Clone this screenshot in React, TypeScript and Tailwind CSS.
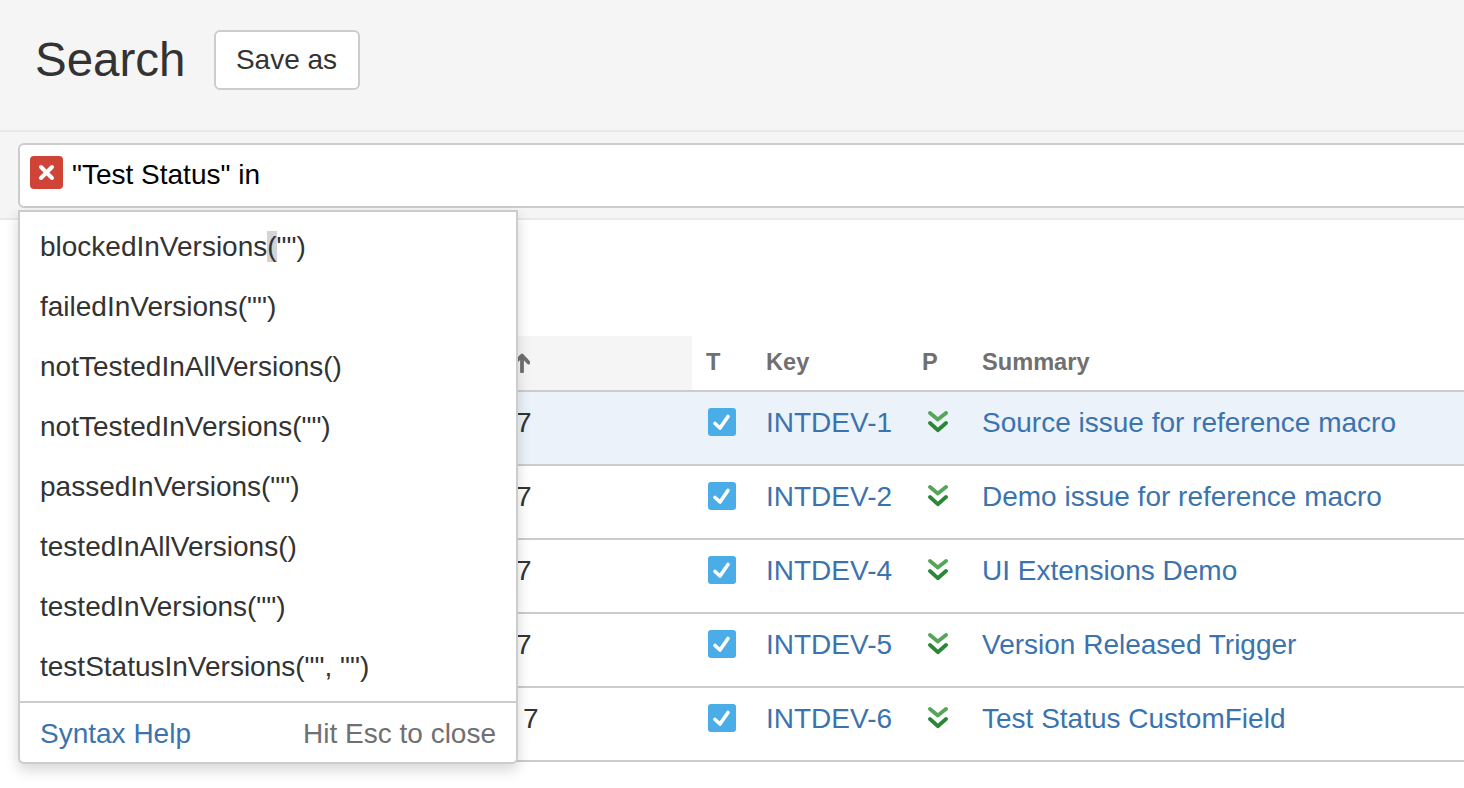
const suggestions = [
  'failedInVersions("")',
  'notTestedInAllVersions()',
  'notTestedInVersions("")',
  'passedInVersions("")',
  'testedInAllVersions()',
  'testedInVersions("")',
  'testStatusInVersions("", "")',
]

const issues = [
  { key: 'INTDEV-1', summary: 'Source issue for reference macro', pad: 'pl-[416px]', bg: 'bg-[#ebf2f9]' },
  { key: 'INTDEV-2', summary: 'Demo issue for reference macro', pad: 'pl-[416px]', bg: 'bg-white' },
  { key: 'INTDEV-4', summary: 'UI Extensions Demo', pad: 'pl-[416px]', bg: 'bg-white' },
  { key: 'INTDEV-5', summary: 'Version Released Trigger', pad: 'pl-[416px]', bg: 'bg-white' },
  { key: 'INTDEV-6', summary: 'Test Status CustomField', pad: 'pl-[423px]', bg: 'bg-white' },
]

function TaskIcon() {
  return (
    <svg width="28" height="28" viewBox="0 0 28 28" className="block">
      <rect width="28" height="28" rx="3" fill="#4bade8" />
      <path d="M7 15.5l5 4.5 8-11.5" fill="none" stroke="#fff" strokeWidth="3.6" strokeLinecap="round" strokeLinejoin="round" />
    </svg>
  )
}

function LowestIcon() {
  return (
    <svg width="20" height="22" viewBox="0 0 20 22" className="block">
      <path d="M2 2l7.8 6.5 8.2-6.5" fill="none" stroke="#57a55a" strokeWidth="3.8" strokeLinecap="round" strokeLinejoin="round" />
      <path d="M2 12l7.8 7.2 8.2-7.2" fill="none" stroke="#2a8735" strokeWidth="3.8" strokeLinecap="round" strokeLinejoin="round" />
    </svg>
  )
}

export default function App() {
  return (
    <div className="relative h-[788px] w-[1464px] overflow-hidden bg-white font-['Liberation_Sans',Arial,sans-serif] text-[28px] text-[#333]">
      <header className="flex h-[132px] items-center border-b-2 border-[#e9e9e9] bg-[#f5f5f5] pb-[10px] pl-[35px]">
        <h1 className="text-[47.5px] leading-none font-normal">Search</h1>
        <button className="ml-[28px] h-[60px] w-[146px] rounded-[6px] border-2 border-[#ccc] bg-white text-[28px]">Save as</button>
      </header>

      <div className="h-[88px] border-b-2 border-[#e9e9e9] bg-[#f5f5f5] pt-[11px] pl-[18px]">
        <div className="flex h-[65px] w-[1470px] items-center rounded-[6px] border-2 border-[#ccc] bg-white pl-[10px] text-black">
          <svg width="33" height="33" viewBox="0 0 33 33" className="mr-[9px] mb-[6px] block">
            <rect width="33" height="33" rx="4" fill="#d04437" />
            <path d="M11 11l11 11M22 11L11 22" stroke="#fff" strokeWidth="4" strokeLinecap="round" />
          </svg>
          <span className="pb-[2px]">"Test Status" in</span>
        </div>
      </div>

      <div className="ml-[100px] pt-[116px]">
        <div className="flex h-[56px] items-center border-b-2 border-[#ccc] text-[23.6px] font-bold text-[#707070]">
          <div className="flex h-[54px] w-[592px] items-center bg-[#f5f5f5] pl-[414px]">
            <svg width="16" height="20" viewBox="0 0 16 20" className="block">
              <path d="M8 18.5V3M2 8.5L8 2.5l6.5 7" fill="none" stroke="#707070" strokeWidth="3.8" strokeLinecap="round" strokeLinejoin="round" />
            </svg>
          </div>
          <div className="w-[74px] pl-[14px]">T</div>
          <div className="w-[156px]">Key</div>
          <div className="w-[60px]">P</div>
          <div>Summary</div>
        </div>
        {issues.map((issue) => (
          <div key={issue.key} className={`flex h-[74px] border-b-2 border-[#ccc] pt-[15px] ${issue.bg}`}>
            <div className={`h-[32px] w-[592px] leading-[32px] ${issue.pad}`}>7</div>
            <div className="w-[74px] pt-[1px] pl-[16px]"><TaskIcon /></div>
            <div className="h-[32px] w-[162px] leading-[32px] text-[#3b73af]">{issue.key}</div>
            <div className="w-[54px] pt-[4px]"><LowestIcon /></div>
            <div className="h-[32px] leading-[32px] text-[#3b73af]">{issue.summary}</div>
          </div>
        ))}
      </div>

      <div className="absolute top-[210px] left-[18px] w-[500px] rounded-b-[6px] border-2 border-[#ccc] bg-white shadow-[0_6px_14px_rgba(0,0,0,0.16)]">
        <ul className="pt-[5px] pb-[4px]">
          <li className="flex h-[60px] items-center pl-[20px]">
            <span>blockedInVersions<span className="bg-[#d4d4d4]">(</span>"")</span>
          </li>
          {suggestions.map((s) => (
            <li key={s} className="flex h-[60px] items-center pl-[20px]">{s}</li>
          ))}
        </ul>
        <div className="flex h-[61px] items-center justify-between border-t-2 border-[#ccc] px-[20px] pt-[2px]">
          <a className="text-[#3b73af]">Syntax Help</a>
          <span className="text-[#707070]">Hit Esc to close</span>
        </div>
      </div>
    </div>
  )
}
